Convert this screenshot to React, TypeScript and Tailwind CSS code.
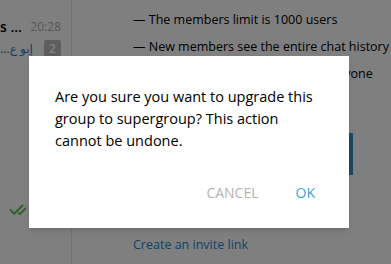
import { CheckCheck } from "lucide-react";

const infoLines = [
  "— The members limit is 1000 users",
  "— New members see the entire chat history",
  "— Deleted messages vanish for everyone",
  "— Notifications are muted by default",
];

export default function App() {
  return (
    <div
      className="relative w-[391px] h-[264px] overflow-hidden bg-white text-black"
      style={{ fontFamily: '"Open Sans", "Noto Sans", sans-serif' }}
    >
      <div className="flex h-full">
        {/* Chat list (cut) */}
        <div className="w-[72px] shrink-0 border-r border-[#e6e6e6] relative">
          <div className="flex items-center justify-between pr-[10px] pt-[17px] h-[20px] box-content">
            <span className="text-[14px] font-semibold leading-[20px] whitespace-nowrap">s ...</span>
            <span className="text-[12px] text-[#b0b0b0] leading-[20px]">20:28</span>
          </div>
          <div className="flex items-center justify-between pr-[10px] mt-[3px] h-[17px]">
            <span
              className="text-[12px] text-[#1a7ec0] leading-[17px] whitespace-nowrap"
              style={{ fontFamily: '"Noto Sans", "DejaVu Sans", sans-serif' }}
              dir="rtl"
            >
              إبو ع...
            </span>
            <span className="w-[17px] h-[17px] rounded-[2px] bg-[#bdbdbd] text-white text-[12px] leading-[17px] text-center font-semibold">
              2
            </span>
          </div>
          <div className="mt-[144px] pl-[9px] text-[#5ec35a]">
            <CheckCheck size={18} strokeWidth={2.5} />
          </div>
        </div>

        {/* Group info */}
        <div className="flex-1 pl-[61px] pt-[6px]">
          {infoLines.map((line) => (
            <div key={line} className="text-[12.5px] leading-[27px] whitespace-nowrap">
              {line}
            </div>
          ))}
          <div className="mt-[19px] w-[220px] h-[42px] bg-[#3d8fc4]" />
          <div className="mt-[60px] text-[12.5px] leading-[20px] text-[#168acd] whitespace-nowrap">
            Create an invite link
          </div>
        </div>
      </div>

      {/* Overlay + confirm box */}
      <div className="absolute inset-0 bg-black/50 pl-[29px] pt-[56px]">
        <div className="w-[320px] h-[172px] bg-white shadow-md pl-[26px] pr-[30px] pt-[30px]">
          <p className="text-[14.5px] leading-[22px] text-black">
            Are you sure you want to upgrade this group to supergroup? This action cannot be undone.
          </p>
          <div className="flex justify-end gap-[37px] mt-[31px] pr-[4px]">
            <button className="text-[14px] leading-[20px] text-[#b3b3b3] uppercase">Cancel</button>
            <button className="text-[14px] leading-[20px] text-[#40a3e0] uppercase">OK</button>
          </div>
        </div>
      </div>
    </div>
  );
}
